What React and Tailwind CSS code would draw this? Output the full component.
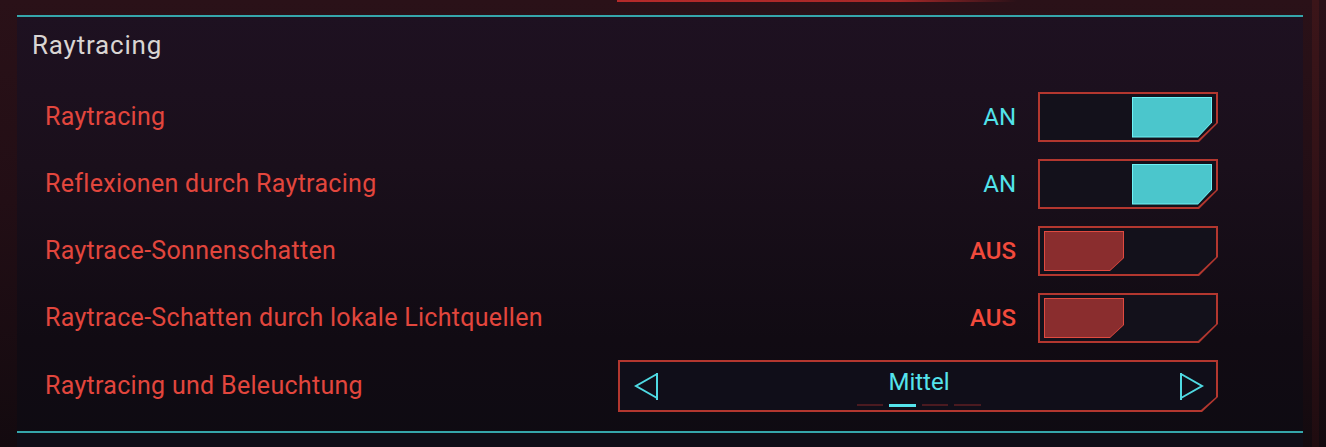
import React from "react";

const font = { fontFamily: "Roboto, 'Liberation Sans', sans-serif" };

function Toggle({ on }) {
  return (
    <div className="w-[180px] h-[50px] bg-[#b3372f] p-[2px] [clip-path:polygon(0_0,100%_0,100%_31px,161px_100%,0_100%)]">
      <div
        className={`w-full h-full bg-[#13111b] flex items-center px-[4px] [clip-path:polygon(0_0,100%_0,100%_29px,158px_100%,0_100%)] ${
          on ? "justify-end" : "justify-start"
        }`}
      >
        {on ? (
          <div className="w-[80px] h-[41px] bg-[#6ef2f6] p-[1px] [clip-path:polygon(0_0,100%_0,100%_26px,66px_100%,0_100%)]">
            <div className="w-full h-full bg-[#4bc6cc] [clip-path:polygon(0_0,100%_0,100%_25px,65px_100%,0_100%)]" />
          </div>
        ) : (
          <div className="w-[80px] h-[40px] bg-[#e04a40] p-[1px] [clip-path:polygon(0_0,100%_0,100%_27px,66px_100%,0_100%)]">
            <div className="w-full h-full bg-[#8a2d2e] [clip-path:polygon(0_0,100%_0,100%_26px,65px_100%,0_100%)]" />
          </div>
        )}
      </div>
    </div>
  );
}

function ToggleRow({ label, on }) {
  return (
    <div className="h-[50px] flex items-center">
      <div className="flex-1 pl-[28px] text-[25px] tracking-[0.3px] text-[#e2463d]">{label}</div>
      <div
        className={`w-[80px] text-right pr-[22px] text-[24px] ${
          on ? "text-[#52e3ea] font-normal" : "text-[#f24a3c] font-medium"
        }`}
      >
        {on ? "AN" : "AUS"}
      </div>
      <Toggle on={on} />
    </div>
  );
}

function Triangle({ dir }) {
  return (
    <svg width="26" height="30" viewBox="0 0 26 30" fill="none">
      {dir === "left" ? (
        <path d="M23 2 L23 29 M23 3 L2 15 L23 27" stroke="#4fd9e2" strokeWidth="2" strokeLinejoin="miter" />
      ) : (
        <path d="M3 2 L3 29 M3 3 L24 15 L3 27" stroke="#4fd9e2" strokeWidth="2" strokeLinejoin="miter" />
      )}
    </svg>
  );
}

function Selector() {
  return (
    <div className="w-[600px] h-[52px] bg-[#b3372f] p-[2px] [clip-path:polygon(0_0,100%_0,100%_37px,584px_100%,0_100%)]">
      <div className="relative w-full h-full bg-[#100e19] flex items-center justify-between pl-[14px] pr-[12px] [clip-path:polygon(0_0,100%_0,100%_35px,581px_100%,0_100%)]">
        <Triangle dir="left" />
        <div className="flex flex-col items-center">
          <div className="text-[24px] leading-[28px] text-[#55e4ec] mt-[-8px]">Mittel</div>
        </div>
        <Triangle dir="right" />
        <div className="absolute left-[237px] top-[42px] flex gap-[6px]">
          <div className="w-[26px] h-[2px] bg-[#4a1a20]" />
          <div className="w-[27px] h-[3px] bg-[#55e4ec]" />
          <div className="w-[26px] h-[2px] bg-[#4a1a20]" />
          <div className="w-[27px] h-[2px] bg-[#4a1a20]" />
        </div>
      </div>
    </div>
  );
}

export default function App() {
  return (
    <div
      className="w-[1326px] h-[447px] overflow-hidden flex bg-[linear-gradient(180deg,#2a1118_0%,#220e15_45%,#130a0f_100%)]"
      style={font}
    >
      <div className="w-[1303px] pl-[17px] flex flex-col">
        <div className="h-[2px] ml-[600px] w-[400px] bg-[linear-gradient(90deg,#b52a2a_0%,#a82828_70%,rgba(120,30,30,0)_100%)]" />
        <div className="mt-[13px] flex-1 flex flex-col bg-[linear-gradient(180deg,#1e1121_0%,#1a0f1b_35%,#110b13_75%,#0e0b12_100%)]">
          <div className="border-t-2 border-b-2 border-[#35a6ab]">
            <div className="pl-[15px] pt-[12px] h-[75px] text-[26px] leading-[32px] tracking-[0.8px] text-[#d9d5d3]">
              Raytracing
            </div>
            <div className="flex flex-col gap-[17px] pr-[85px]">
              <ToggleRow label="Raytracing" on />
              <ToggleRow label="Reflexionen durch Raytracing" on />
              <ToggleRow label="Raytrace-Sonnenschatten" on={false} />
              <ToggleRow label="Raytrace-Schatten durch lokale Lichtquellen" on={false} />
              <div className="h-[52px] flex items-center">
                <div className="flex-1 pl-[28px] text-[25px] tracking-[0.3px] text-[#e2463d]">
                  Raytracing und Beleuchtung
                </div>
                <Selector />
              </div>
            </div>
            <div className="h-[19px]" />
          </div>
          <div className="flex-1 bg-[#0f0d17]" />
        </div>
      </div>
      <div className="ml-[9px] w-[7px] self-stretch bg-[linear-gradient(180deg,#3b1519_0%,#2e1015_60%,#1f0c10_100%)]" />
      <div className="flex-1" />
    </div>
  );
}
